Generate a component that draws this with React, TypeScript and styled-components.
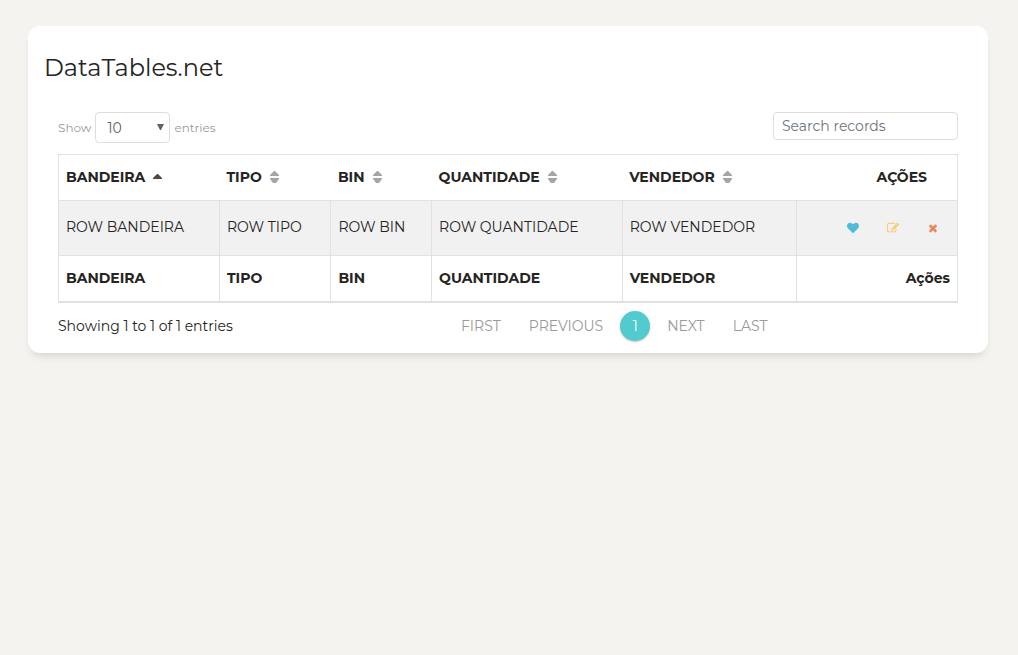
import React from "react";
import styled, { createGlobalStyle } from "styled-components";

const GlobalStyle = createGlobalStyle`
  *, *::before, *::after { box-sizing: border-box; }
  body {
    margin: 0;
    background: #f4f3ef;
    color: #252422;
    font-family: Montserrat, Inter, "Open Sans", sans-serif;
    font-size: 14px;
    font-weight: 400;
    line-height: 20px;
  }
`;

const Page = styled.main`
  padding: 26px 30px 26px 28px;
`;

const Card = styled.section`
  padding: 26px 16px 12px;
  border-radius: 12px;
  background: #fff;
  box-shadow: 0 6px 10px -4px rgba(0, 0, 0, 0.15);
`;

const Title = styled.h1`
  margin: 0 0 28px;
  font-size: 24px;
  font-weight: 400;
  line-height: 32px;
`;

const Content = styled.div`
  padding: 0 14px;
`;

const Toolbar = styled.div`
  display: flex;
  align-items: flex-start;
  justify-content: space-between;
  margin-bottom: 11px;
`;

const LengthLabel = styled.label`
  display: flex;
  align-items: center;
  gap: 4px;
  color: #9a9a9a;
  font-size: 12px;
`;

const SelectBox = styled.span`
  position: relative;
  display: block;
`;

const LengthSelect = styled.select`
  display: block;
  appearance: none;
  width: 75px;
  height: 31px;
  padding: 0 24px 0 11px;
  border: 1px solid #ddd;
  border-radius: 4px;
  background: #fff;
  color: #66615b;
  font: inherit;
  font-size: 14px;
`;

const SelectArrow = styled.svg`
  position: absolute;
  top: 12px;
  right: 6px;
  width: 7px;
  height: 6px;
  fill: #66615b;
  pointer-events: none;
`;

const SearchInput = styled.input`
  width: 185px;
  height: 28px;
  padding: 0 8px;
  border: 1px solid #ddd;
  border-radius: 4px;
  background: #fff;
  color: #66615b;
  font: inherit;
  font-size: 14px;
  &::placeholder { color: #6c757d; opacity: 1; }
`;

const Table = styled.table`
  width: 100%;
  table-layout: fixed;
  border-collapse: collapse;
  border: 1px solid #dee2e6;
  border-bottom-width: 2px;
`;

const Column = styled.col<{ $share: number }>`
  width: ${({ $share }) => $share}%;
`;

const HeadCell = styled.th<{ $actions?: boolean }>`
  height: 46px;
  padding: 0 ${({ $actions }) => ($actions ? 30 : 7)}px 1px 7px;
  border-bottom: 1px solid #dee2e6;
  text-align: ${({ $actions }) => ($actions ? "right" : "left")};
  font-weight: 700;
  white-space: nowrap;
`;

const SortButton = styled.button`
  display: flex;
  align-items: center;
  gap: 8px;
  padding: 0;
  border: 0;
  background: none;
  color: inherit;
  font: inherit;
  cursor: pointer;
`;

const SortGlyph = styled.svg<{ $active: boolean }>`
  width: 9px;
  height: 14px;
  fill: ${({ $active }) => ($active ? "#4c4b4a" : "#a5a5a4")};
`;

const BodyCell = styled.td`
  height: 55px;
  padding: 0 7px 2px;
  border: 1px solid #dee2e6;
  background: #f1f1f1;
  white-space: nowrap;
`;

const ActionsCell = styled(BodyCell)`
  padding: 0 4px 0 0;
`;

const Actions = styled.div`
  display: flex;
  justify-content: flex-end;
`;

const ActionButton = styled.button<{ $color: string }>`
  display: flex;
  align-items: center;
  justify-content: center;
  width: 40px;
  height: 26px;
  padding: 0;
  border: 0;
  background: none;
  color: ${({ $color }) => $color};
  cursor: pointer;
  svg { width: 12px; height: 12px; fill: currentColor; }
`;

const FootCell = styled.th<{ $right?: boolean }>`
  height: 46px;
  padding: 0 7px;
  border: 1px solid #dee2e6;
  border-bottom: 2px solid #dee2e6;
  text-align: ${({ $right }) => ($right ? "right" : "left")};
  font-weight: 700;
  white-space: nowrap;
`;

const Footer = styled.div`
  display: grid;
  grid-template-columns: 43fr 57fr;
  align-items: center;
  padding-top: 8px;
`;

const Pagination = styled.nav`
  display: flex;
  align-items: center;
  gap: 6px;
  padding-left: 5px;
`;

const PageLink = styled.a<{ $active?: boolean }>`
  display: block;
  min-width: 30px;
  height: 30px;
  padding: 0 ${({ $active }) => ($active ? 0 : 11)}px;
  border-radius: 15px;
  background: ${({ $active }) => ($active ? "#51cbce" : "transparent")};
  box-shadow: ${({ $active }) => ($active ? "0 1px 2px rgba(0, 0, 0, 0.25)" : "none")};
  color: ${({ $active }) => ($active ? "#fff" : "#9a9a9a")};
  line-height: 30px;
  text-align: center;
  text-decoration: none;
`;

const columns = [
  { name: "BANDEIRA", share: 17.9 },
  { name: "TIPO", share: 12.4 },
  { name: "BIN", share: 11.2 },
  { name: "QUANTIDADE", share: 21.2 },
  { name: "VENDEDOR", share: 19.4 },
];

const actions = [
  {
    label: "Like",
    color: "#51bcda",
    path: "M896 1664q-26 0-44-18l-624-602q-10-8-27.5-26t-55.5-65.5-68-97.5-53.5-121-23.5-138q0-220 127-344t351-124q62 0 126.5 21.5t120 58 95.5 68.5 76 68q36-36 76-68t95.5-68.5 120-58 126.5-21.5q224 0 351 124t127 344q0 221-229 450l-623 600q-18 18-44 18z",
  },
  {
    label: "Edit",
    color: "#fbc658",
    path: "M888 1184l116-116-152-152-116 116v56h96v96h56zm440-720q-16-16-33 1l-350 350q-17 17-1 33t33-1l350-350q17-17 1-33zm80 594v190q0 119-84.5 203.5t-203.5 84.5h-832q-119 0-203.5-84.5t-84.5-203.5v-832q0-119 84.5-203.5t203.5-84.5h832q63 0 117 25 15 7 18 23 3 17-9 29l-49 49q-14 14-32 8-23-6-45-6h-832q-66 0-113 47t-47 113v832q0 66 47 113t113 47h832q66 0 113-47t47-113v-126q0-13 9-22l64-64q15-15 35-7t20 29zm-96-738l288 288-672 672h-288v-288zm444 132l-92 92-288-288 92-92q28-28 68-28t68 28l152 152q28 28 28 68t-28 68z",
  },
  {
    label: "Remove",
    color: "#ef8157",
    path: "M1490 1322q0 40-28 68l-136 136q-28 28-68 28t-68-28l-294-294-294 294q-28 28-68 28t-68-28l-136-136q-28-28-28-68t28-68l294-294-294-294q-28-28-28-68t28-68l136-136q28-28 68-28t68 28l294 294 294-294q28-28 68-28t68 28l136 136q28 28 28 68t-28 68l-294 294 294 294q28 28 28 68z",
  },
];

function SortIcon({ active }: { active: boolean }) {
  return (
    <SortGlyph $active={active} viewBox="0 0 9 14" aria-hidden="true">
      {active ? (
        <path d="M4 4h1l4 4v1H0V8z" />
      ) : (
        <path d="M4 1h1l4 4v1H0V5zM0 8h9v1l-3 4H3L0 9z" />
      )}
    </SortGlyph>
  );
}

export default function App() {
  return (
    <>
      <GlobalStyle />
      <Page>
        <Card>
          <Title>DataTables.net</Title>
          <Content>
            <Toolbar>
              <LengthLabel>
                Show
                <SelectBox>
                  <LengthSelect defaultValue="10">
                    <option value="10">10</option>
                    <option value="25">25</option>
                    <option value="50">50</option>
                    <option value="-1">All</option>
                  </LengthSelect>
                  <SelectArrow viewBox="0 0 7 6" aria-hidden="true">
                    <path d="M0 0h7L4 6H3z" />
                  </SelectArrow>
                </SelectBox>
                entries
              </LengthLabel>
              <SearchInput type="search" placeholder="Search records" aria-label="Search records" />
            </Toolbar>
            <Table>
              <colgroup>
                {columns.map((c) => (
                  <Column key={c.name} $share={c.share} />
                ))}
                <Column $share={17.9} />
              </colgroup>
              <thead>
                <tr>
                  {columns.map((c, i) => (
                    <HeadCell key={c.name} scope="col" aria-sort={i === 0 ? "ascending" : "none"}>
                      <SortButton type="button">
                        {c.name}
                        <SortIcon active={i === 0} />
                      </SortButton>
                    </HeadCell>
                  ))}
                  <HeadCell scope="col" $actions>AÇÕES</HeadCell>
                </tr>
              </thead>
              <tbody>
                <tr>
                  {columns.map((c) => (
                    <BodyCell key={c.name}>ROW {c.name}</BodyCell>
                  ))}
                  <ActionsCell>
                    <Actions>
                      {actions.map((a) => (
                        <ActionButton key={a.label} type="button" $color={a.color} aria-label={a.label}>
                          <svg viewBox="0 0 1792 1792" aria-hidden="true">
                            <path d={a.path} />
                          </svg>
                        </ActionButton>
                      ))}
                    </Actions>
                  </ActionsCell>
                </tr>
              </tbody>
              <tfoot>
                <tr>
                  {columns.map((c) => (
                    <FootCell key={c.name}>{c.name}</FootCell>
                  ))}
                  <FootCell $right>Ações</FootCell>
                </tr>
              </tfoot>
            </Table>
            <Footer>
              <div role="status">Showing 1 to 1 of 1 entries</div>
              <Pagination aria-label="Table pages">
                <PageLink href="#first">FIRST</PageLink>
                <PageLink href="#previous">PREVIOUS</PageLink>
                <PageLink href="#1" $active aria-current="page">1</PageLink>
                <PageLink href="#next">NEXT</PageLink>
                <PageLink href="#last">LAST</PageLink>
              </Pagination>
            </Footer>
          </Content>
        </Card>
      </Page>
    </>
  );
}
